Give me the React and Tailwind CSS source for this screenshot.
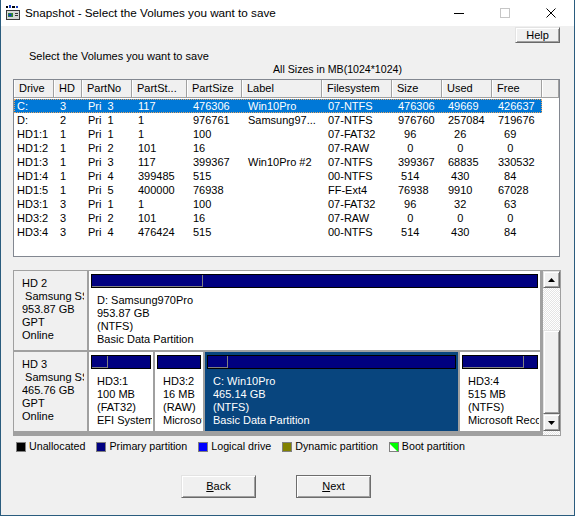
import React from 'react';

const cols = [
  { name: 'Drive', w: 'w-[40px]', pad: 'pl-[3px]' },
  { name: 'HD', w: 'w-[28px]', pad: 'pl-[6px]' },
  { name: 'PartNo', w: 'w-[50px]', pad: 'pl-[6px]' },
  { name: 'PartSt...', w: 'w-[55px]', pad: 'pl-[6px]' },
  { name: 'PartSize', w: 'w-[55px]', pad: 'pl-[6px]' },
  { name: 'Label', w: 'w-[80px]', pad: 'pl-[6px]' },
  { name: 'Filesystem', w: 'w-[70px]', pad: 'pl-[6px]' },
  { name: 'Size', w: 'w-[50px]', pad: 'pl-[6px]' },
  { name: 'Used', w: 'w-[50px]', pad: 'pl-[6px]' },
  { name: 'Free', w: 'w-[50px]', pad: 'pl-[6px]' },
];

const rows = [
  ['C:', '3', 'Pri  3', '117', '476306', 'Win10Pro', '07-NTFS', '476306', '49669', '426637'],
  ['D:', '2', 'Pri  1', '1', '976761', 'Samsung97...', '07-NTFS', '976760', '257084', '719676'],
  ['HD1:1', '1', 'Pri  1', '1', '100', '', '07-FAT32', '96', '26', '69'],
  ['HD1:2', '1', 'Pri  2', '101', '16', '', '07-RAW', '0', '0', '0'],
  ['HD1:3', '1', 'Pri  3', '117', '399367', 'Win10Pro #2', '07-NTFS', '399367', '68835', '330532'],
  ['HD1:4', '1', 'Pri  4', '399485', '515', '', '00-NTFS', '514', '430', '84'],
  ['HD1:5', '1', 'Pri  5', '400000', '76938', '', 'FF-Ext4', '76938', '9910', '67028'],
  ['HD3:1', '3', 'Pri  1', '1', '100', '', '07-FAT32', '96', '32', '63'],
  ['HD3:2', '3', 'Pri  2', '101', '16', '', '07-RAW', '0', '0', '0'],
  ['HD3:4', '3', 'Pri  4', '476424', '515', '', '00-NTFS', '514', '430', '84'],
];

// size columns are space padded like the original list
const pad = (s) => ' '.repeat(Math.max(0, 4 - s.length)) + s;

const disks = [
  {
    info: ['HD 2', ' Samsung SSD 970 PRO', '953.87 GB', 'GPT', 'Online'],
    parts: [
      { w: 'w-[451px]', used: 25, lines: ['D: Samsung970Pro', '953.87 GB', '(NTFS)', 'Basic Data Partition'] },
    ],
  },
  {
    info: ['HD 3', ' Samsung SSD 970 EVO', '465.76 GB', 'GPT', 'Online'],
    parts: [
      { w: 'w-[64px]', used: 27, lines: ['HD3:1', '100 MB', '(FAT32)', 'EFI System Partition'] },
      { w: 'w-[48px]', used: 0, lines: ['HD3:2', '16 MB', '(RAW)', 'Microsoft Reserved Partition'] },
      { w: 'w-[253px]', used: 8, selected: true, lines: ['C: Win10Pro', '465.14 GB', '(NTFS)', 'Basic Data Partition'] },
      { w: 'w-[80px]', used: 83, lines: ['HD3:4', '515 MB', '(NTFS)', 'Microsoft Recovery Partition'] },
    ],
  },
];

const legend = [
  { label: 'Unallocated', color: 'bg-black' },
  { label: 'Primary partition', color: 'bg-[#000080]' },
  { label: 'Logical drive', color: 'bg-[#0000ff]' },
  { label: 'Dynamic partition', color: 'bg-[#808000]' },
];

const AppIcon = () => (
  <svg width="16" height="16" viewBox="0 0 16 16">
    <rect x="1" y="1" width="2" height="2" fill="#000" />
    <rect x="4" y="0" width="2" height="3" fill="#1a3fc0" />
    <rect x="7" y="1" width="3" height="2" fill="#000" />
    <rect x="11" y="1" width="2" height="2" fill="#1a3fc0" />
    <rect x="1.5" y="5.5" width="13" height="9" fill="#d8d8d8" stroke="#3a3a3a" />
    <rect x="3" y="8" width="5" height="4" fill="#2e8b2e" />
    <circle cx="5" cy="10" r="1.6" fill="#1a3fc0" />
    <rect x="10" y="8" width="3" height="1" fill="#3a3a3a" />
    <rect x="10" y="10" width="3" height="1" fill="#3a3a3a" />
  </svg>
);

const Arrow = ({ up }) => (
  <svg width="7" height="4" viewBox="0 0 7 4">
    <polygon points={up ? '3.5,0 7,4 0,4' : '0,0 7,0 3.5,4'} fill="#000" />
  </svg>
);

const raised = 'bg-[#f0f0f0] border border-t-[#e3e3e3] border-l-[#e3e3e3] border-b-[#696969] border-r-[#696969] shadow-[inset_1px_1px_#ffffff,inset_-1px_-1px_#a0a0a0]';

const Partition = ({ part }) => (
  <div className={`${part.w} h-full shrink-0 overflow-hidden ${part.selected ? 'bg-[#08457e] text-white' : 'bg-white text-black'}`}>
    <div className="mt-[3px] mx-[2px] h-[14px] border border-black bg-[#000080] flex">
      {part.used > 0 && (
        <div className="h-full border-r border-b border-[#808080]" style={{ width: `${part.used}%` }} />
      )}
    </div>
    <div className="mt-[6px] pl-[8px] pr-[1px] leading-[13px] whitespace-nowrap overflow-hidden">
      {part.lines.map((l, i) => (
        <div key={i} className="overflow-hidden">{l}</div>
      ))}
    </div>
  </div>
);

export default function App() {
  return (
    <div className="w-[575px] h-[516px] bg-[#f0f0f0] border-x border-b border-[#2a5c7e] flex flex-col font-['Liberation_Sans',Arial,sans-serif] text-[11px] text-black overflow-hidden">
      {/* title bar */}
      <div className="h-[26px] shrink-0 bg-white flex items-center">
        <div className="ml-[4px]">
          <AppIcon />
        </div>
        <span className="ml-[4px] text-[11.7px]">Snapshot - Select the Volumes you want to save</span>
        <div className="ml-auto flex h-full">
          <div className="w-[46px] h-full flex items-center justify-center">
            <div className="w-[10px] h-px bg-black" />
          </div>
          <div className="w-[46px] h-full flex items-center justify-center">
            <div className="w-[10px] h-[10px] border border-[#c6c6c6]" />
          </div>
          <div className="w-[46px] h-full flex items-center justify-center">
            <svg width="10" height="10" viewBox="0 0 10 10">
              <path d="M0.5 0.5L9.5 9.5M9.5 0.5L0.5 9.5" stroke="#000" strokeWidth="1" />
            </svg>
          </div>
        </div>
      </div>

      <div className="flex justify-end pr-[14px] mt-[1px]">
        <button className={`w-[45px] h-[16px] leading-[12px] ${raised}`}>Help</button>
      </div>

      <div className="mt-[7px] pl-[28px] h-[13px] leading-[13px]">Select the Volumes you want to save</div>
      <div className="pl-[272px] h-[13px] leading-[13px] text-[10.6px]">All Sizes in MB(1024*1024)</div>

      {/* volume list */}
      <div className="mt-[3px] ml-[12px] w-[547px] h-[178px] shrink-0 border border-[#828790] bg-white flex flex-col">
        <div className="flex h-[18px] shrink-0 bg-[#f0f0f0] border-b border-[#a0a0a0]">
          {cols.map((c) => (
            <div
              key={c.name}
              className={`${c.w} h-full shrink-0 pl-[5px] leading-[17px] border-r border-[#a0a0a0] shadow-[inset_1px_0_#ffffff] whitespace-nowrap overflow-hidden`}
            >
              {c.name}
            </div>
          ))}
          <div className="flex-1 h-full border-r border-[#a0a0a0] shadow-[inset_1px_0_#ffffff]" />
        </div>
        <div className="pt-[1px]">
          {rows.map((r, i) => (
            <div
              key={i}
              className={`flex w-[528px] h-[14px] leading-[12px] ${
                i === 0 ? 'bg-[#0078d7] text-white border border-dotted border-[#e7a563]' : 'border border-transparent'
              }`}
            >
              {r.map((v, j) => (
                <div
                  key={j}
                  className={`${cols[j].w} shrink-0 ${cols[j].pad} whitespace-pre overflow-hidden ${j === 0 ? '-ml-px' : ''}`}
                >
                  {j >= 7 ? pad(v) : v}
                </div>
              ))}
            </div>
          ))}
        </div>
      </div>

      {/* disk map */}
      <div className="mt-[13px] ml-[12px] w-[548px] h-[166px] shrink-0 border border-[#a0a0a0] flex">
        <div className="w-[529px] h-full flex flex-col bg-[#a0a0a0] overflow-hidden">
          {disks.map((d, i) => (
            <div key={i} className="flex h-[81px] shrink-0 gap-[2px] pb-[2px]">
              <div className="w-[73px] h-full shrink-0 bg-[#f0f0f0] pl-[8px] pt-[6px] leading-[13px]">
                <div className="w-[62px] overflow-hidden whitespace-pre">
                  {d.info.map((l, k) => (
                    <div key={k} className="overflow-hidden">{l}</div>
                  ))}
                </div>
              </div>
              {d.parts.map((p, k) => (
                <Partition key={k} part={p} />
              ))}
            </div>
          ))}
        </div>
        <div className="w-[17px] h-full flex flex-col">
          <div className={`h-[17px] shrink-0 flex items-center justify-center ${raised}`}>
            <Arrow up />
          </div>
          <div className="h-[42px] shrink-0 bg-[image:repeating-conic-gradient(#ffffff_0_25%,#e4e4e4_0_50%)] bg-[length:2px_2px]" />
          <div className={`h-[84px] shrink-0 ${raised}`} />
          <div className={`h-[17px] shrink-0 flex items-center justify-center ${raised}`}>
            <Arrow />
          </div>
          <div className="flex-1 bg-[image:repeating-conic-gradient(#ffffff_0_25%,#e4e4e4_0_50%)] bg-[length:2px_2px]" />
        </div>
      </div>

      {/* legend */}
      <div className="mt-[4px] h-[13px] flex items-center pl-[15px] leading-[13px] text-[10.7px]">
        {legend.map((l) => (
          <div key={l.label} className="flex items-center mr-[11px]">
            <div className={`w-[10px] h-[10px] border border-[#808080] ${l.color}`} />
            <span className="ml-[3px]">{l.label}</span>
          </div>
        ))}
        <div className="flex items-center">
          <svg width="10" height="10" viewBox="0 0 10 10">
            <rect x="0.5" y="0.5" width="9" height="9" fill="#00ff00" stroke="#808080" />
            <polygon points="1,2 1,9 8,9" fill="#ffffff" />
          </svg>
          <span className="ml-[3px]">Boot partition</span>
        </div>
      </div>

      {/* buttons */}
      <div className="mt-[22px] flex pl-[180px] gap-[40px]">
        <button className={`w-[75px] h-[23px] ${raised}`}>
          <span className="underline">B</span>ack
        </button>
        <button className="w-[75px] h-[23px] bg-[#f0f0f0] border border-[#6d6d6d] shadow-[inset_1px_1px_#ffffff,inset_-1px_-1px_#a0a0a0]">
          <span className="underline">N</span>ext
        </button>
      </div>
    </div>
  );
}
